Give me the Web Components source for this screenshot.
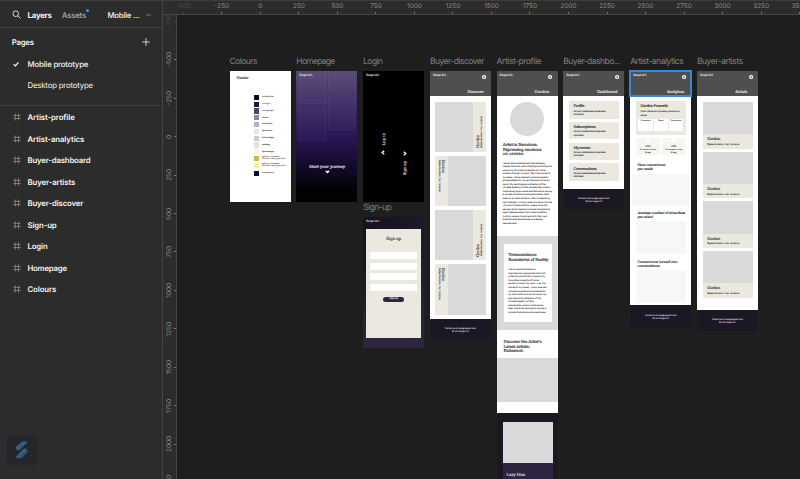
<!DOCTYPE html>
<html lang="en"><head><meta charset="utf-8"><title>Mobile prototype</title>
<style>
html,body{margin:0;height:100%;overflow:hidden;background:#1e1e1e}
body{font-family:Inter,"Liberation Sans",sans-serif}
</style></head><body>
<design-app></design-app>
<script>
const BASE = `*{box-sizing:border-box}:host{display:block;box-sizing:border-box;text-rendering:geometricPrecision}.col{display:flex;flex-direction:column}.row{display:flex}f-t{flex:none}`;
function define(name, css, html){
  customElements.define(name, class extends HTMLElement{
    connectedCallback(){
      if(this.shadowRoot) return;
      const t=document.createElement('template');
      t.innerHTML='<style>'+BASE+css+'</style>'+(typeof html==='function'?html(this):html);
      this.attachShadow({mode:'open'}).append(t.content.cloneNode(true));
    }
  });
}
// ft(text, width, size, line height, top margin, extra style)
// Text of the miniature pages gets a hairline stroke to stay legible.
const ft=(t,w,s,h,mt=0,st='',attr='serif')=>`<f-t w="${w}" ${attr} style="font-size:${s<3.2?(s*1.06).toFixed(2):s}px;line-height:${h}px;margin-top:${mt}px;${s<5?'-webkit-text-stroke:'+(s>3?.1:.05)+'px currentColor;':''}${st}">${t}</f-t>`;
const lines=(arr,s,h,st='',attr='')=>arr.map(([t,w])=>ft(t,w,s,h,0,st,attr)).join('');

/* ---------- side panel ---------- */
define('layer-row',`:host{display:flex;align-items:center;height:21.52px;padding-left:12.8px;color:#f4f4f4;font-weight:600}
svg{width:8px;height:8px;margin-right:6.7px;flex:none}`,
 e=>`<svg viewBox="0 0 8 8" fill="none" stroke="#8a8a8a" stroke-width=".8"><path d="M2.3 .5v7M5.5 .5v7M.3 2.4h7.4M.3 5.5h7.4"/></svg>${ft(e.textContent,e.getAttribute('w'),7.8,10,0,'','')}`);

define('side-panel',`:host{width:162px;height:479px;background:#2c2c2c;flex:none;border-top:1px solid #3d3d3d;color:#f4f4f4;font-size:7.8px}
.tabs{display:flex;align-items:center;height:27px;border-bottom:1px solid #404040;padding:1px 0 0 12px}
.tabs svg,.pg svg{flex:none}
.as{color:#adadad;position:relative;margin-left:10.3px}
.dot{position:absolute;width:3px;height:3px;border-radius:50%;background:#3a9bf5;right:-3.5px;top:-.2px}
.pages{height:78px;border-bottom:1px solid #404040;padding-top:3.200px}
.pg{display:flex;align-items:center;height:21.6px;padding-left:27.5px;font-weight:500}
.head{padding:0 12px 0 11.7px;justify-content:space-between;font-weight:600}
.cur{padding-left:12.5px}.cur svg{margin-right:8.7px}
.layers{display:flex;flex-direction:column;padding-top:.3px}
.badge{position:absolute;left:8px;top:436px;width:27.5px;height:27.5px;border-radius:4px;background:#24262c;box-shadow:0 0 2px 1px #24262c;display:grid;place-items:center}`,
`<div class="tabs"><svg width="9" height="9" viewBox="0 0 9 9" fill="none" stroke="#e4e4e4" stroke-width=".95"><circle cx="3.7" cy="3.7" r="2.8"/><path d="M5.8 5.8 8.4 8.4"/></svg>
${ft('Layers',24,7.8,10,0,'margin-left:6.6px;font-weight:700','')}
<div class="as">${ft('Assets',24,7.8,10,0,'font-weight:500','')}<i class="dot"></i></div>
${ft('Mobile ...',32,7.8,10,0,'margin-left:21.5px;font-weight:500','')}
<svg style="margin-left:7px" width="5" height="4" viewBox="0 0 5 4" fill="none" stroke="#aaa" stroke-width=".7"><path d="M.5 3 2.5 1 4.5 3"/></svg></div>
<div class="pages"><div class="pg head">${ft('Pages',22,7.8,10,0,'','')}<svg width="8" height="8" viewBox="0 0 8 8" stroke="#ddd" stroke-width=".9"><path d="M4 .2v7.6M.2 4h7.6"/></svg></div>
<div class="pg cur"><svg width="6.3" height="6" viewBox="0 0 6.3 6" fill="none" stroke="#fff" stroke-width="1.2"><path d="M.7 3.2 2.3 4.8 5.5 1.3"/></svg>${ft('Mobile prototype',60.7,7.8,10,0,'','')}</div>
<div class="pg">${ft('Desktop prototype',65.5,7.8,10,0,'font-weight:400','')}</div></div>
<div class="layers">
<layer-row w="47.3">Artist-profile</layer-row><layer-row w="56.7">Artist-analytics</layer-row><layer-row w="63">Buyer-dashboard</layer-row><layer-row w="47.7">Buyer-artists</layer-row><layer-row w="55.7">Buyer-discover</layer-row><layer-row w="29">Sign-up</layer-row><layer-row w="20">Login</layer-row><layer-row w="39.3">Homepage</layer-row><layer-row w="28.6">Colours</layer-row></div>
<div class="badge"><svg width="13" height="18" viewBox="0 0 13 18"><defs><linearGradient id="g" x1="0" y1="0" x2="1" y2="1"><stop offset="0" stop-color="#436f95"/><stop offset="1" stop-color="#2b4963"/></linearGradient></defs><path d="M6.600 1.200Q7.300.5 8.200.5H11.600Q12.800.8 12 1.700L4.600 9.200Q.5 9.300.5 6.900Q.5 6.100 1.300 5.600Z" fill="url(#g)"/><path d="M8.400 8Q9 7.500 9.700 7.500Q12.500 7.900 12.400 10.400Q12.300 11.200 11.700 11.800L7 16.400Q5.900 17.300 4.900 17.300H1.800Q.2 17 1.100 15.600Z" fill="url(#g)"/></svg></div>`);

/* ---------- rulers ---------- */
const range=(a,b)=>{const r=[];for(let i=a;i<=b;i+=250)r.push(i);return r};
define('h-ruler',`:host{height:15px;background:#2c2c2c;border-top:1px solid #3d3d3d;border-bottom:1px solid #444;overflow:hidden}
.r{display:flex;padding-left:1.1px}.t{width:38.53px;flex:none;display:flex;flex-direction:column;align-items:center;color:#8a8a8a;font-size:6.4px;line-height:9px;height:13px;padding-top:.6px;justify-content:space-between}
.t i{width:1px;height:2.5px;background:#777}.dim{opacity:.35}`,
()=>`<div class="r">${range(-500,3500).map(n=>`<div class="t ${n<-250?'dim':''}"><span>${n}</span><i></i></div>`).join('')}</div>`);
define('v-ruler',`:host{width:14px;height:464px;background:#2c2c2c;border-right:1px solid #444;flex:none;overflow:hidden}
.r{display:flex;flex-direction:column;margin-top:-13px}.t{height:38.46px;flex:none;display:flex;align-items:center;justify-content:space-between;color:#8a8a8a;font-size:6.4px;line-height:10px;padding-left:.5px}
.t span{writing-mode:vertical-rl;transform:rotate(180deg)}.t i{width:2.5px;height:1px;background:#777}.dim{opacity:.35}`,
()=>`<div class="r">${range(-750,2250).map(n=>`<div class="t ${n<-500?'dim':''}"><span>${n}</span><i></i></div>`).join('')}</div>`);

/* ---------- frame pieces ---------- */
define('page-head',`:host{height:25px;background:#4f4f4f;color:#f1f1f1;padding:2.6px 5.200px 0 3px;flex:none}
.row{justify-content:space-between;height:4.600px}
:host([selected]){outline:2px solid #3b86dd;outline-offset:-1px;position:relative}
svg{margin-top:1.6px;flex:none;overflow:visible}`,
e=>`<div class="row">${ft('Regal Art.',13.5,3,4,0,'','')}<svg width="4.200" height="4.200" viewBox="0 0 8 8"><circle cx="4" cy="4" r="4" fill="#fff"/><circle cx="4" cy="3" r="1.200" fill="#444"/><path d="M2 6q2-3 4 0z" fill="#444"/></svg></div>
${ft(e.getAttribute('t'),e.getAttribute('w'),3.9,5,10.6,'margin-left:'+(e.getAttribute('x')-3)+'px')}`);
define('page-foot',`:host{height:21.3px;background:#1b1824;color:#dedde2;flex:none;padding-top:8.300px;display:flex;flex-direction:column;align-items:center}`,
`${ft('Contact us at hello@regalart.com',31.5,2,3.1,0,'','')}${ft('© 2023 Regal Art',16.8,2,3.1,0,'','')}`);
const STY='<b>Styles:</b> Illustration · Pop · Sculpture';
define('art-tile',`:host{display:flex;height:50.4px;margin-bottom:3.75px;background:#d9d9d9;justify-content:flex-end}
:host([flip]){justify-content:flex-start}
.n{background:#eae8df;width:13.2px;display:flex;color:#333;padding:4.2px 0 4.2px 1.5px;align-items:flex-end}
:host([flip]) .n{flex-direction:row-reverse;justify-content:flex-end;align-items:flex-start;padding-left:2.5px}`,
e=>{const a=e.hasAttribute('flip')?'serif vert':'serif vert up',b=a.replace('serif ','');return `<div class="n">${ft('Gordon',12.7,3.8,5,0,'',a)}${ft(STY,32,2.1,4,0,'',b)}</div>`});
define('artist-card',`:host{height:46.8px;margin-bottom:3px;background:#eae8df;color:#333}.p{height:32.3px;background:#d9d9d9}.n{padding:1.9px 0 0 4.6px}`,
`<div class="p"></div><div class="n">${ft('Gordon',12.8,3.9,5)}${ft(STY,32,2.1,3,1.9,'','')}</div>`);
define('pref-card',`:host{height:17.6px;margin-bottom:3.2px;background:#eae8df;color:#222;padding:2.1px 0 0 4.4px}`,
e=>ft(e.textContent,e.getAttribute('w'),3.8,5)+ft('Edit your preferences and personal',32.3,1.95,3.1,2.5,'','')+ft('information',10.3,1.95,3.1,0,'',''));

/* ---------- frames ---------- */
define('frame-box',`:host{position:absolute;width:61px}.b{background:#fff;overflow:hidden}:host([selected]) .b{overflow:visible}.l{height:14.200px;color:#808080;padding-top:.9px}`,
e=>`<div class="l">${ft(e.getAttribute('label'),e.getAttribute('w'),8.5,11,0,'','')}</div><div class="b"><slot></slot></div>`);

define('colours-page',`:host{height:131.500px;padding:4.900px 0 0 7px;color:#333}
.s{display:flex;align-items:center;height:6.770px;margin-left:17.300px}.s i{width:5.400px;height:5.200px;margin-right:2.600px;flex:none}.s.two{height:7px}.last{margin-top:1.500px}`,
()=>ft('Header',12,3.5,5)+'<div style="height:13.500px"></div>'+[['#0d0a1c',[['midnight/dark',12]]],['#1b1830',[['midnight',8.5]]],['#4a4363',[['midnight/light',12]]],['#8b86a5',[['lavender',6.5]]],['#b3b0c8',[['lavender/light',10.5]]],['#e6e5ef',[['light/lavender',10.5]]],['#cfcdc5',[['dark/neutral/grey',12]]],['#e5e3da',[['neutral/grey',8]]],['#f4f4ee',[['light/neutral/grey',12]]],['#cabb3f',[['gold // on mouse/tab',17.5],['click/link, step by you finish',24]]],['#f8f38b',[['gold // on mouse/tab',17.5],['click/link, step by you finish',24]]],['#08083a',[['hover/gradient',12]]]].map(([c,t],i)=>`<div class="s ${i==11?'last':''}"><i style="background:${c}"></i><div>${lines(t,1.8,2.300)}</div></div>`).join(''));

define('home-page',`:host{height:131.500px;background:linear-gradient(#584a75 0,#3b2a64 30%,#291452 52%,#140a2c 72%,#020104 91%,#000);color:#ece9f3;display:grid;grid-template-columns:27px 27.5px;gap:0 2px;padding:0 2.500px;align-content:start}
.t{border:.8px solid #ffffff09;border-top:0;background:#ffffff05}.c{display:flex;flex-direction:column;gap:2px}
.o{position:absolute;left:3px;top:16.800px}.m{position:absolute;left:12.700px;top:107px}`,
`<div class="c"><div class="t" style="height:33.600px"></div><div class="t" style="height:35px"></div></div><div class="c"><div class="t" style="height:22.700px"></div><div class="t" style="height:35px"></div></div>
<div class="o">${ft('Regal Art.',13.500,3,4,0,'','')}</div><div class="m">${ft('Start your journey',36,4,5)}<svg width="5" height="4" viewBox="0 0 5 4" style="display:block;margin:1px 0 0 15.800px" fill="none" stroke="#fff" stroke-width="1.300"><path d="M.8.8 2.500 2.500 4.200.8"/></svg></div>`);

define('login-page',`:host{height:131.500px;background:#000;color:#eee;padding:2.600px 3px}
.g{display:flex;justify-content:space-between;padding:55.500px 13.500px 0 14.200px}.c{width:6px;display:flex;flex-direction:column;align-items:center}svg{margin:5px 0;display:block;flex:none}`,
`${ft('Regal Art.',13.500,3,4,0,'','')}<div class="g"><div class="c">${ft('Log in',12.500,3.800,5,0,'','serif vert up')}<svg width="4" height="5" viewBox="0 0 4 5" fill="none" stroke="#fff" stroke-width="1.300"><path d="M3.200.8 1.200 2.500 3.200 4.200"/></svg></div><div class="c" style="padding-top:12.700px"><svg width="4" height="5" viewBox="0 0 4 5" fill="none" stroke="#fff" stroke-width="1.300"><path d="M.8.8 2.800 2.500.8 4.200"/></svg>${ft('Sign up',14.300,3.800,5,0,'','serif vert up')}</div></div>`);

define('signup-page',`:host{height:131px;background:linear-gradient(100deg,#120e1a00,#2f274366),linear-gradient(#15111e,#1d182a 50%,#2f2743);color:#ddd;padding:2.300px 3px}
.k{height:109.300px;background:#eae8df;margin-top:5.800px;padding:8.500px 4px 0;color:#333;display:flex;flex-direction:column;align-items:center}
.f{height:7px;width:47px;background:#fff;border-radius:.5px;margin-bottom:3.600px;flex:none}
.btn{margin-top:2.200px;width:20.300px;height:5.800px;border-radius:3px;background:#2d2542;color:#eee;display:flex;justify-content:center;align-items:center}`,
`${ft('Regal Art.',13.500,3,4,0,'','')}<div class="k">${ft('Sign up',15,4.300,6,0,'margin-bottom:8.700px')}<div class="f"></div><div class="f"></div><div class="f"></div><div class="f"></div><div class="btn">${ft('Sign up',8.500,2.500,4)}</div></div>`);

define('discover-page',`.c{height:223.300px;padding:6px 4.700px 0}`,
`<page-head t="Discover" x="37.5" w="16.3"></page-head><div class="c"><art-tile></art-tile><art-tile flip></art-tile><art-tile></art-tile><art-tile flip></art-tile></div><page-foot></page-foot>`);

const bio=[['I am an accomplished and internationally',158],['recognized artist with a lifelong commitment to',179],['exploring the profound depths of human',161],['emotion through my work. Over the course of',173],['my career, I have received numerous awards',166],['and accolades for my contributions to the art',171],['world. My paintings are a reflection of the',159],['intricate tapestry of life’s complexities, where I',174],['meticulously layer colors and textures to convey',179],['a myriad of emotions and experiences. Each',171],['piece is a visual narrative, often juxtaposing',172],['light and dark, inviting viewers to delve into the',179],['rich and intimate stories I weave onto the',165],['canvas. My art seeks to provoke thought and',172],['spark dialogue about the human condition,',165],['inviting viewers to connect with their own',165],['emotions and experiences on a deeply',151],['personal level.',74]].map(([t,e])=>[t,(e-31)/3]);
const story=[['I am an accomplished and',129],['internationally recognized artist with',159],['a lifelong commitment to exploring',157],['the profound depths of human',141],['emotion through my work. Over the',159],['course of my career, I have received',162],['numerous awards and accolades for',159],['my contributions to the art world. My',162],['paintings are a reflection of the',145],['intricate tapestry of life’s',124],['complexities, where I meticulously',153],['layer colors and textures to convey a',161],['myriad of emotions and experiences.',161]].map(([t,e])=>[t,(e-47)/3]);
define('profile-page',`:host{color:#222}
.a{height:140px;padding:6.600px 0 0 6.200px}.av{width:34px;height:34px;border-radius:50%;background:#d9d9d9;margin:0 0 7.100px 7.500px}
.b{height:94.300px;background:#d9d9d9;padding:8.300px 6px 0 7px}.k{height:78px;background:#fff;border-radius:.8px;padding:9.100px 0 0 4.600px}
.c{height:27.700px;padding:10.300px 0 0 7px}.d{height:44.300px;background:#d9d9d9}.e{height:10.700px}
.f{height:70px;background:#1b1824;padding:9.300px 5px 0 6px}.p{height:41px;background:#d9d9d9}.q{height:24px;background:#2d2540;padding:8.500px 4px;color:#ddd}`,
`<page-head t="Gordon" x="38" w="14.7"></page-head><div class="a"><div class="av"></div>${lines([['Artist in Barcelona.',35],['Expressing emotions',38.500],['on canvas.',21.600]],4,4.500,'','serif')}<div style="height:4.600px"></div>${lines(bio,2.100,3.550)}</div>
<div class="b"><div class="k">${lines([['Transcendence:',28.700],['Boundaries of Reality',40]],4,4.400,'','serif')}<div style="height:6.200px"></div>${lines(story,2.050,3.560)}</div></div>
<div class="c">${lines([['Discover the Artist’s',38],['Latest Artistic',26],['Endeavors',19.300]],4,4.500,'','serif')}</div><div class="d"></div><div class="e"></div>
<div class="f"><div class="p"></div><div class="q">${ft('Lazy Man',18.700,4,5)}</div></div>`);

define('dashboard-page',`.c{height:93px;padding:5.300px 5.300px 0 5.700px}`,
`<page-head t="Dashboard" x="33.7" w="20.3"></page-head><div class="c"><pref-card w="10.7">Profile</pref-card><pref-card w="22">Subscriptions</pref-card><pref-card w="16.7">My events</pref-card><pref-card w="23">Conversations</pref-card></div><page-foot></page-foot>`);

define('analytics-page',`:host{color:#222}.c{height:209.600px;padding:5.300px 5.500px 0}
.k{height:33.700px;background:#eae8df;padding:2.200px 2.400px 0 4.700px}.w{display:flex;gap:.5px;margin:2.500px 0 0 -2px}.w div{flex:1;height:12px;background:#fff;display:flex;justify-content:center;padding-top:1.300px}
.two{display:flex;gap:1.700px;margin:3px 0 7.800px}.two div{flex:1;height:17.400px;background:#f6f5f0;display:flex;flex-direction:column;align-items:center;padding-top:1.500px}.two i{width:4px;height:4px;border-radius:50%;background:#fff;margin-bottom:1.500px;flex:none}
.h{padding-left:1.700px}.g{background:#f7f7f7;height:32.800px}`,
`<page-head selected t="Analytics" x="36.7" w="17"></page-head><div class="c"><div class="k">${ft('Gordon Pranecki',27.300,3.800,5)}${ft('Artist in Barcelona. Expressing emotions on',39.300,2,3.100,2.200,'','')}${ft('canvas.',6.500,2,3.100,0,'','')}
<div class="w"><div>${ft('Connections',10,1.800,3,0,'','')}</div><div>${ft('Events',5,1.800,3,0,'','')}</div><div>${ft('Conversations',11,1.800,3,0,'','')}</div></div></div>
<div class="two"><div><i></i>${ft('100%',5,2.200,3)}${ft('Connections in last',16,1.800,2.300,1.500,'','')}${ft('30 days',6,1.800,2.300,0,'','')}</div><div><i></i>${ft('100%',5,2.200,3)}${ft('Conversations in last',17,1.800,2.300,1.500,'','')}${ft('30 days',6,1.800,2.300,0,'','')}</div></div>
<div class="h">${lines([['New connections',27.700],['per week',15.300]],3.500,4,'','serif')}</div><div class="g" style="margin:2.600px -4px 4.900px"></div>
<div class="h">${lines([['Average number of attendees',47.800],['per event',15.600]],3.500,4,'','serif')}</div><div class="g" style="margin:2.200px 0 5.300px"></div>
<div class="h">${lines([['Connections turned into',40],['conversations',22.300]],3.500,4,'','serif')}</div><div class="g" style="margin-top:2.600px"></div></div><page-foot></page-foot>`);

define('artists-page',`.c{height:214px;padding:6px 5.300px 0 5.700px}`,
`<page-head t="Artists" x="38.3" w="12"></page-head><div class="c"><artist-card></artist-card><artist-card></artist-card><artist-card></artist-card><artist-card></artist-card></div><page-foot></page-foot>`);

define('design-app',`:host{display:flex;width:800px;height:479px;background:#1e1e1e;overflow:hidden}
.m{flex:1;min-width:0;border-left:1px solid #444;display:flex;flex-direction:column}.r{display:flex}frame-box{top:56.600px}`,
`<side-panel></side-panel><div class="m"><h-ruler></h-ruler><div class="r"><v-ruler></v-ruler></div></div>
<frame-box style="left:229.600px" label="Colours" w="27.3"><colours-page></colours-page></frame-box>
<frame-box style="left:296.300px" label="Homepage" w="38.3"><home-page></home-page></frame-box>
<frame-box style="left:363.100px" label="Login" w="19.5"><login-page></login-page></frame-box>
<frame-box style="left:363.100px;top:202.500px" label="Sign-up" w="28"><signup-page></signup-page></frame-box>
<frame-box style="left:429.900px" label="Buyer-discover" w="54"><discover-page></discover-page></frame-box>
<frame-box style="left:496.600px" label="Artist-profile" w="44.5"><profile-page></profile-page></frame-box>
<frame-box style="left:563.300px" label="Buyer-dashbo..." w="56.3"><dashboard-page></dashboard-page></frame-box>
<frame-box selected style="left:630.200px" label="Artist-analytics" w="53"><analytics-page></analytics-page></frame-box>
<frame-box style="left:696.900px" label="Buyer-artists" w="45.8"><artists-page></artists-page></frame-box>`);

/* A single text line whose tracking is set so that it spans its w attribute. */
customElements.define('f-t', class extends HTMLElement{
  connectedCallback(){
    if(this.shadowRoot) return;
    this.attachShadow({mode:'open'}).innerHTML=`<style>:host{display:block;white-space:nowrap;text-rendering:geometricPrecision}:host([serif]){font-family:"DejaVu Serif","Liberation Serif",serif}span{display:inline-block;vertical-align:top}:host([vert]) span{writing-mode:vertical-rl}:host([up]) span{transform:rotate(180deg)}</style><span><slot></slot></span>`;
    const s=this.shadowRoot.querySelector('span'),r=s.getBoundingClientRect(),n=this.textContent.length;
    const vert=this.hasAttribute('vert');
    s.style.letterSpacing=((+this.getAttribute('w')-(vert?r.height:r.width))/n).toFixed(4)+'px';
  }
});
</script></body></html>
